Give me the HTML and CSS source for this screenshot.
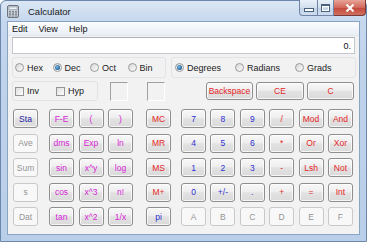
FILE: index.html
```html
<!DOCTYPE html>
<html lang="en">
<head>
    <meta charset="UTF-8">
    <title>Calculator</title>
    <link rel="stylesheet" href="styles.css">
</head>
<body>
    <div class="window">
        <div class="titlebar">
            <svg class="app-icon" width="12" height="13" viewBox="0 0 12 13">
                <rect x="0.5" y="0.5" width="11" height="12" rx="1.5" fill="#c9ced6" stroke="#6d7480"/>
                <rect x="2" y="2" width="8" height="2.5" fill="#eef3f8" stroke="#7d8794" stroke-width="0.5"/>
                <g fill="#7b8390">
                    <rect x="2" y="6" width="2" height="1.5"/><rect x="5" y="6" width="2" height="1.5"/><rect x="8" y="6" width="2" height="1.5"/>
                    <rect x="2" y="8.3" width="2" height="1.5"/><rect x="5" y="8.3" width="2" height="1.5"/><rect x="8" y="8.3" width="2" height="1.5"/>
                    <rect x="2" y="10.5" width="2" height="1"/><rect x="5" y="10.5" width="2" height="1"/><rect x="8" y="10.5" width="2" height="1"/>
                </g>
            </svg>
            <span class="title">Calculator</span>
            <div class="caption">
                <span class="cap-btn min"><i></i></span>
                <span class="cap-btn max"><i></i></span>
                <span class="cap-btn close">
                    <svg width="10" height="8" viewBox="0 0 10 8"><path d="M1.5 0.5 L8.5 7.5 M8.5 0.5 L1.5 7.5" stroke="#fff" stroke-width="2"/></svg>
                </span>
            </div>
        </div>

        <div class="client">
            <div class="menubar">
                <span>Edit</span>
                <span>View</span>
                <span>Help</span>
            </div>

            <div class="body">
                <div class="display">0.</div>

                <div class="mode-row">
                    <div class="group radix">
                        <label class="opt"><span class="radio"></span>Hex</label>
                        <label class="opt"><span class="radio on"></span>Dec</label>
                        <label class="opt"><span class="radio"></span>Oct</label>
                        <label class="opt"><span class="radio"></span>Bin</label>
                    </div>
                    <div class="group angle">
                        <label class="opt"><span class="radio on"></span>Degrees</label>
                        <label class="opt"><span class="radio"></span>Radians</label>
                        <label class="opt"><span class="radio"></span>Grads</label>
                    </div>
                </div>

                <div class="check-row">
                    <div class="group flags">
                        <label class="opt"><span class="check"></span>Inv</label>
                        <label class="opt"><span class="check"></span>Hyp</label>
                    </div>
                    <div class="sunken first"></div>
                    <div class="sunken second"></div>
                    <div class="edit-keys">
                        <button class="key red wide">Backspace</button>
                        <button class="key red wide ce">CE</button>
                        <button class="key red wide">C</button>
                    </div>
                </div>

                <div class="keypad">
                    <div class="pad stat">
                        <button class="key navy">Sta</button>
                        <button class="key off">Ave</button>
                        <button class="key off">Sum</button>
                        <button class="key off">s</button>
                        <button class="key off">Dat</button>
                    </div>
                    <div class="pad sci">
                        <button class="key pink">F-E</button>
                        <button class="key pink">(</button>
                        <button class="key pink">)</button>
                        <button class="key pink">dms</button>
                        <button class="key pink">Exp</button>
                        <button class="key pink">ln</button>
                        <button class="key pink">sin</button>
                        <button class="key pink">x^y</button>
                        <button class="key pink">log</button>
                        <button class="key pink">cos</button>
                        <button class="key pink">x^3</button>
                        <button class="key pink">n!</button>
                        <button class="key pink">tan</button>
                        <button class="key pink">x^2</button>
                        <button class="key pink">1/x</button>
                    </div>
                    <div class="pad mem">
                        <button class="key red">MC</button>
                        <button class="key red">MR</button>
                        <button class="key red">MS</button>
                        <button class="key red">M+</button>
                        <button class="key blue">pi</button>
                    </div>
                    <div class="pad main">
                        <button class="key blue">7</button>
                        <button class="key blue">8</button>
                        <button class="key blue">9</button>
                        <button class="key red">/</button>
                        <button class="key red">Mod</button>
                        <button class="key red">And</button>
                        <button class="key blue">4</button>
                        <button class="key blue">5</button>
                        <button class="key blue">6</button>
                        <button class="key red">*</button>
                        <button class="key red">Or</button>
                        <button class="key red">Xor</button>
                        <button class="key blue">1</button>
                        <button class="key blue">2</button>
                        <button class="key blue">3</button>
                        <button class="key red">-</button>
                        <button class="key red">Lsh</button>
                        <button class="key red">Not</button>
                        <button class="key blue">0</button>
                        <button class="key blue">+/-</button>
                        <button class="key blue">.</button>
                        <button class="key red">+</button>
                        <button class="key red">=</button>
                        <button class="key red">Int</button>
                        <button class="key off">A</button>
                        <button class="key off">B</button>
                        <button class="key off">C</button>
                        <button class="key off">D</button>
                        <button class="key off">E</button>
                        <button class="key off">F</button>
                    </div>
                </div>
            </div>
        </div>
    </div>
</body>
</html>
```

FILE: styles.css
```css
body {
    margin: 0;
    padding: 0;
    font-family: 'Liberation Sans', Arial, sans-serif;
    background: #ffffff;
}
.window {
    width: 367px;
    height: 242px;
    box-sizing: border-box;
    padding: 0 6px 6px;
    border: 1px solid #6b87aa;
    border-radius: 6px 6px 0 0;
    background: linear-gradient(#dbe7f4, #c6d8ee 20px, #bfd3eb 60px, #b9cee8);
    display: flex;
    flex-direction: column;
}

/* title bar */
.titlebar {
    height: 20px;
    display: flex;
    align-items: flex-start;
    margin-right: -6px;
}
.app-icon {
    margin: 4px 0 0 0;
}
.title {
    font-size: 9.5px;
    color: #1b1b1b;
    margin: 5px 0 0 9px;
}
.caption {
    margin-left: auto;
    display: flex;
    margin-top: -1px;
}
.cap-btn {
    height: 16px;
    border: 1px solid #6f85a3;
    border-top: none;
    box-sizing: border-box;
    display: flex;
    align-items: center;
    justify-content: center;
    background: linear-gradient(#e9f0f8, #d3dfee 50%, #c3d3e8 51%, #cfdcee);
}
.min {
    width: 18px;
    border-right: none;
    border-radius: 0 0 0 4px;
}
.max {
    width: 17px;
}
.close {
    width: 32px;
    border-left: none;
    border-color: #7a3a38;
    border-radius: 0 0 4px 0;
    background: linear-gradient(#e7a397, #d2685b 50%, #c4473a 51%, #d0705f);
}
.min i {
    display: block;
    width: 8px;
    height: 2px;
    margin-top: 5px;
    background: #ffffff;
    border: 1px solid #4b607c;
}
.max i {
    display: block;
    width: 7px;
    height: 5px;
    border: 1px solid #4b607c;
    border-top-width: 2px;
    box-shadow: inset 0 0 0 1px #ffffff;
}

/* client area */
.client {
    flex: 1;
    border: 1px solid #8ba4c2;
    background: #f2f2f2;
    display: flex;
    flex-direction: column;
}
.menubar {
    height: 13px;
    display: flex;
    align-items: center;
    padding-left: 4px;
    font-size: 9px;
    color: #111;
    background: linear-gradient(#fbfcfe, #e9eef6);
    border-bottom: 1px solid #e3e8f0;
}
.menubar span {
    margin-right: 11px;
}
.body {
    padding: 0 4px;
}
.display {
    margin-top: 1px;
    height: 17px;
    box-sizing: border-box;
    border: 1px solid #c3c8d0;
    border-top-color: #abb0b9;
    background: #ffffff;
    font-size: 9px;
    text-align: right;
    padding: 3px 3px 0 0;
    color: #111;
}

/* option groups */
.mode-row {
    margin-top: 3px;
    height: 21px;
    display: flex;
    gap: 5px;
}
.group {
    box-sizing: border-box;
    border: 1px solid #e0e3e7;
    border-radius: 3px;
    display: flex;
    align-items: center;
    font-size: 9px;
    color: #222;
}
.radix {
    width: 155px;
    padding-left: 2px;
}
.radix .opt {
    width: 37.5px;
}
.angle {
    flex: 1;
    padding-left: 3px;
}
.angle .opt {
    width: 60px;
}
.opt {
    display: flex;
    align-items: center;
    gap: 3px;
}
.radio {
    width: 9px;
    height: 9px;
    box-sizing: border-box;
    border-radius: 50%;
    border: 1px solid #9a9b9b;
    background: linear-gradient(135deg, #d8d8d8, #fbfbfb);
    position: relative;
}
.radio.on::after {
    content: "";
    position: absolute;
    left: 1px;
    top: 1px;
    width: 5px;
    height: 5px;
    border-radius: 50%;
    background: radial-gradient(circle at 40% 40%, #7ec0ec, #1d5d91 70%);
}
.check {
    width: 9px;
    height: 9px;
    box-sizing: border-box;
    border: 1px solid #959595;
    background: linear-gradient(135deg, #e0e0e0, #fdfdfd);
}

.check-row {
    margin-top: 3px;
    height: 20px;
    display: flex;
    align-items: center;
}
.flags {
    width: 86px;
    height: 20px;
    padding-left: 2px;
}
.flags .opt {
    width: 47px;
}
.sunken {
    width: 18px;
    height: 19px;
    box-sizing: border-box;
    border: 1px solid #ffffff;
    border-top-color: #a0a0a0;
    border-left-color: #a0a0a0;
}
.sunken.first {
    margin-left: 12px;
}
.sunken.second {
    margin-left: 19px;
}
.edit-keys {
    margin-left: auto;
    margin-right: 1px;
    display: flex;
    gap: 3px;
}

/* keys */
.key {
    font-family: inherit;
    font-size: 8.5px;
    padding: 0;
    margin: 0;
    height: 19px;
    box-sizing: border-box;
    border: 1px solid #8e8e8e;
    border-radius: 3px;
    background: linear-gradient(#f8f8f8, #eeeeee 45%, #e2e2e2 52%, #dadada);
    box-shadow: inset 0 0 0 1px rgba(255, 255, 255, 0.75);
    display: flex;
    align-items: center;
    justify-content: center;
}
.key.wide {
    width: 47px;
    height: 18px;
}
.key.ce {
    width: 48px;
}
.key.off {
    color: #959595;
    border-color: #c9c9c9;
    background: #f8f8f8;
    box-shadow: none;
}
.navy { color: #2424a8; }
.blue { color: #2f2fd2; }
.red { color: #e42626; }
.pink { color: #d626d6; }

.keypad {
    margin-top: 8px;
    display: flex;
}
.pad {
    display: grid;
    grid-template-rows: repeat(5, 19px);
    row-gap: 5.5px;
}
.stat {
    margin-left: 1px;
    grid-template-columns: 25px;
}
.sci {
    margin-left: 11px;
    grid-template-columns: repeat(3, 25px);
    column-gap: 4.5px;
}
.mem {
    margin-left: 13px;
    grid-template-columns: 25px;
}
.main {
    margin-left: 10px;
    grid-template-columns: repeat(6, 25px);
    column-gap: 4.4px;
}
```
